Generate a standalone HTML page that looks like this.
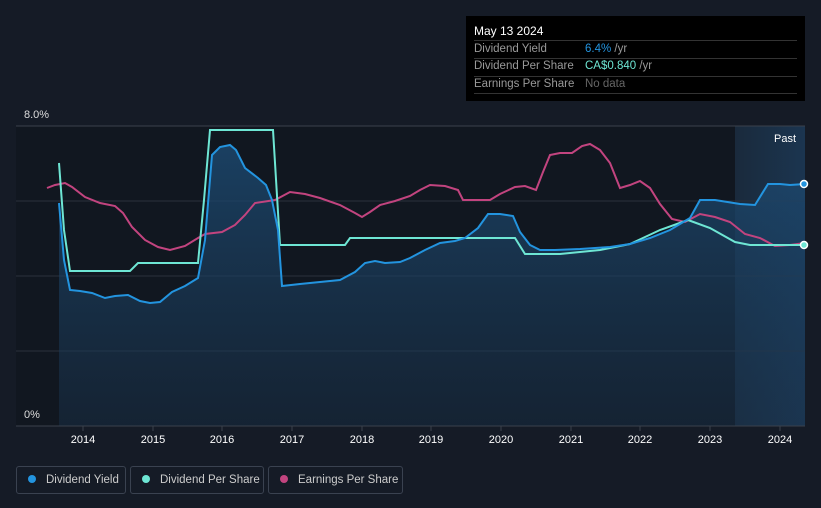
<!DOCTYPE html><html><head><style>
body{margin:0;width:821px;height:508px;background:#151b26;font-family:"Liberation Sans",sans-serif;overflow:hidden;position:relative}
.tip{position:absolute;left:466px;top:16px;width:339px;height:85px;background:#000}
.tip div{position:absolute;left:8px;font-size:11.5px;color:#999;white-space:nowrap}
.ln{position:absolute;left:8px;width:323px;height:1px;background:#333}
.lg{position:absolute;top:466px;border:1px solid #3a4250;border-radius:3px;color:#ccc;font-size:11.5px;line-height:26px;box-sizing:border-box;height:28px;white-space:nowrap;overflow:hidden}
.lg i{display:inline-block;width:8px;height:8px;border-radius:50%;margin:0 10px 0 11px}
</style></head><body>
<svg width="821" height="508" style="position:absolute;left:0;top:0">
<defs><linearGradient id="g" x1="0" y1="0" x2="0" y2="1"><stop offset="0" stop-color="#1c4a72" stop-opacity=".8"/><stop offset="1" stop-color="#1a3550" stop-opacity=".4"/></linearGradient>
<linearGradient id="p" x1="0" y1="0" x2="1" y2="0"><stop offset="0" stop-color="#1a2a3c"/><stop offset="1" stop-color="#1b3550"/></linearGradient></defs>
<rect x="16" y="126" width="719" height="300" fill="#111720"/>
<rect x="735" y="126" width="70" height="300" fill="url(#p)"/>
<line x1="16" y1="126" x2="805" y2="126" stroke="#3a414c"/>
<line x1="16" y1="201" x2="805" y2="201" stroke="#2a313c"/>
<line x1="16" y1="276" x2="805" y2="276" stroke="#2a313c"/>
<line x1="16" y1="351" x2="805" y2="351" stroke="#2a313c"/>
<path fill="url(#g)" d="M59,203 L64,260 70,290 80,291 92,293 105,298 115,296 128,295 140,301 150,303 160,302 172,292 185,286 198,278 205,240 212,155 220,147 230,145 236,150 245,168 258,178 266,185 272,200 278,230 282,286 300,284 320,282 340,280 355,272 365,263 375,261 385,263 400,262 410,258 425,250 440,243 455,241 465,238 478,228 488,214 500,214 513,216 520,232 530,245 540,250 555,250 580,249 610,247 630,244 650,238 670,230 690,218 700,200 715,200 740,204 755,205 768,184 780,184 790,185 805,184 L805,426 L59,426Z"/>
<polyline fill="none" stroke="#c2447f" stroke-width="2" points="47,188 55,185 65,183 72,187 85,197 100,203 115,206 123,213 132,227 145,240 158,247 170,250 185,246 198,238 205,234 222,232 235,225 245,215 255,203 275,200 290,192 305,194 320,198 340,205 355,213 362,217 370,212 380,205 395,201 410,196 420,190 430,185 445,186 458,190 463,200 480,200 490,200 500,194 515,187 525,186 536,190 543,172 550,155 560,153 572,153 582,146 590,144 600,150 610,163 620,188 630,185 640,181 650,188 660,204 672,219 685,222 700,214 715,217 730,222 745,234 760,238 775,246 790,245 805,243"/>
<polyline fill="none" stroke="#6ee6d4" stroke-width="2" points="59,163 64,230 70,271 130,271 138,263 198,263 204,200 210,130 273,130 280,245 345,245 350,238 515,238 525,254 560,254 600,250 630,244 660,230 688,220 710,228 735,242 750,245 790,245 805,245"/>
<polyline fill="none" stroke="#2394df" stroke-width="2" points="59,203 64,260 70,290 80,291 92,293 105,298 115,296 128,295 140,301 150,303 160,302 172,292 185,286 198,278 205,240 212,155 220,147 230,145 236,150 245,168 258,178 266,185 272,200 278,230 282,286 300,284 320,282 340,280 355,272 365,263 375,261 385,263 400,262 410,258 425,250 440,243 455,241 465,238 478,228 488,214 500,214 513,216 520,232 530,245 540,250 555,250 580,249 610,247 630,244 650,238 670,230 690,218 700,200 715,200 740,204 755,205 768,184 780,184 790,185 805,184"/>
<circle cx="804" cy="184" r="3.5" fill="#2394df" stroke="#fff" stroke-width="1.5"/>
<circle cx="804" cy="245" r="3.5" fill="#6ee6d4" stroke="#fff" stroke-width="1.5"/>
<line x1="16" y1="426" x2="805" y2="426" stroke="#3a414c"/>
<g stroke="#3a414c"><line x1="83" y1="426" x2="83" y2="431"/><line x1="153" y1="426" x2="153" y2="431"/><line x1="222" y1="426" x2="222" y2="431"/><line x1="292" y1="426" x2="292" y2="431"/><line x1="362" y1="426" x2="362" y2="431"/><line x1="431" y1="426" x2="431" y2="431"/><line x1="501" y1="426" x2="501" y2="431"/><line x1="571" y1="426" x2="571" y2="431"/><line x1="640" y1="426" x2="640" y2="431"/><line x1="710" y1="426" x2="710" y2="431"/><line x1="780" y1="426" x2="780" y2="431"/></g>
<g fill="#fff" font-size="11" text-anchor="middle" font-family="Liberation Sans"><text x="83" y="443">2014</text><text x="153" y="443">2015</text><text x="222" y="443">2016</text><text x="292" y="443">2017</text><text x="362" y="443">2018</text><text x="431" y="443">2019</text><text x="501" y="443">2020</text><text x="571" y="443">2021</text><text x="640" y="443">2022</text><text x="710" y="443">2023</text><text x="780" y="443">2024</text></g>
<g fill="#ddd" font-size="11" font-family="Liberation Sans"><text x="24" y="118">8.0%</text><text x="24" y="418">0%</text><text x="774" y="142" fill="#fff">Past</text></g>
</svg>
<div class="tip">
<div style="top:8px;color:#fff;font-size:12px">May 13 2024</div>
<div class="ln" style="top:24px"></div>
<div style="top:27px">Dividend Yield</div><div style="top:27px;left:119px"><span style="color:#2394df">6.4%</span> /yr</div>
<div class="ln" style="top:42px"></div>
<div style="top:44px">Dividend Per Share</div><div style="top:44px;left:119px"><span style="color:#6ee6d4">CA$0.840</span> /yr</div>
<div class="ln" style="top:60px"></div>
<div style="top:62px">Earnings Per Share</div><div style="top:62px;left:119px;color:#666">No data</div>
<div class="ln" style="top:77px"></div>
</div>
<div class="lg" style="left:16px;width:110px"><i style="background:#2394df"></i>Dividend Yield</div>
<div class="lg" style="left:130px;width:134px"><i style="background:#6ee6d4"></i>Dividend Per Share</div>
<div class="lg" style="left:268px;width:135px"><i style="background:#c2447f"></i>Earnings Per Share</div>
</body></html>
